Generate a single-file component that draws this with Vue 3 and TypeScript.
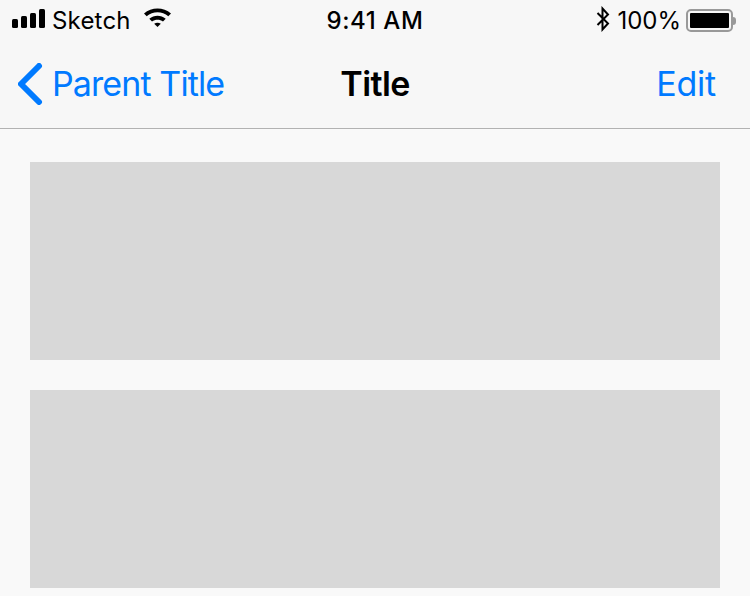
<template>
  <div class="screen">
    <header class="top">
      <div class="status-bar">
        <div class="status-left">
          <div class="signal">
            <span v-for="h in signalBars" :key="h" class="signal-bar" :style="{ height: h + 'px' }"></span>
          </div>
          <span class="carrier">Sketch</span>
          <svg class="wifi" width="30" height="20" viewBox="0 0 30 20">
            <path d="M1 6.500 C8.500 -0.300 20.500 -0.300 28 6.500 L25.300 9.300 C19.200 4 9.800 4 3.700 9.300 Z" />
            <path d="M6.300 11.800 C11 7.700 18 7.700 22.700 11.800 L20 14.600 C16.800 12 12.200 12 9 14.600 Z" />
            <path d="M11.200 16.800 C13.200 15.300 15.800 15.300 17.800 16.800 L14.500 20 Z" />
          </svg>
        </div>
        <span class="time">9:41 AM</span>
        <div class="status-right">
          <svg class="bluetooth" width="14" height="26" viewBox="0 0 14 26">
            <path d="M1.500 7 L12 17.500 L6.500 23.500 L6.500 2.500 L12 8.500 L1.500 19" fill="none" stroke="#000" stroke-width="2" />
          </svg>
          <span class="battery-text">100%</span>
          <div class="battery">
            <div class="battery-body"><div class="battery-fill"></div></div>
            <div class="battery-cap"></div>
          </div>
        </div>
      </div>
      <nav class="nav-bar">
        <a class="nav-back">
          <svg width="26" height="42" viewBox="0 0 26 42">
            <path d="M21 3 L3 21 L21 39" fill="none" stroke="#007aff" stroke-width="6" stroke-linecap="round" stroke-linejoin="round" />
          </svg>
          <span class="nav-back-label">Parent Title</span>
        </a>
        <span class="nav-title">Title</span>
        <a class="nav-edit">Edit</a>
      </nav>
    </header>
    <main class="content">
      <div v-for="n in 2" :key="n" class="block"></div>
    </main>
  </div>
</template>

<script setup lang="ts">
const signalBars: number[] = [9, 12, 15, 19];
</script>

<style>
html,
body {
  margin: 0;
  background: #f9f9f9;
}
</style>

<style scoped>
.screen {
  width: 750px;
  height: 596px;
  overflow: hidden;
  background: #f9f9f9;
  font-family: Inter, "Liberation Sans", sans-serif;
  color: #000;
}

.top {
  height: 128px;
  background: #f7f7f7;
  border-bottom: 1px solid #b2b2b2;
}

.status-bar {
  height: 40px;
  padding: 1px 14px 0 12px;
  box-sizing: border-box;
  position: relative;
  display: flex;
  align-items: center;
  justify-content: space-between;
  font-size: 24px;
}

.status-left,
.status-right {
  display: flex;
  align-items: center;
}

.signal {
  display: flex;
  align-items: flex-end;
  gap: 3px;
  height: 19px;
  margin-top: -5px;
}

.signal-bar {
  width: 6px;
  border-radius: 1.5px;
  background: #000;
}

.carrier {
  margin-left: 7px;
  letter-spacing: 0.2px;
}

.wifi {
  margin-left: 12px;
  margin-top: -7px;
}

.time {
  position: absolute;
  left: 0;
  right: 0;
  text-align: center;
  font-weight: 500;
  letter-spacing: 0.6px;
}

.bluetooth {
  margin-right: 7px;
  margin-top: -3px;
}

.battery-text {
  margin-right: 5px;
}

.battery {
  display: flex;
  align-items: center;
}

.battery-body {
  width: 47px;
  height: 23px;
  box-sizing: border-box;
  padding: 2px;
  border: 2px solid #999;
  border-radius: 5px;
}

.battery-fill {
  height: 100%;
  background: #000;
  border-radius: 1px;
}

.battery-cap {
  width: 3px;
  height: 8px;
  background: #999;
  border-radius: 0 3px 3px 0;
}

.nav-bar {
  height: 88px;
  padding: 0 34px 0 18px;
  position: relative;
  display: flex;
  align-items: center;
  justify-content: space-between;
  font-size: 34px;
  color: #007aff;
}

.nav-back {
  display: flex;
  align-items: center;
  gap: 8px;
}

.nav-back-label,
.nav-title,
.nav-edit {
  margin-top: -2px;
}

.nav-back-label {
  letter-spacing: -0.9px;
}

.nav-title {
  position: absolute;
  left: 0;
  right: 0;
  text-align: center;
  font-weight: 600;
  letter-spacing: -0.6px;
  color: #000;
}

.nav-edit {
  letter-spacing: -0.2px;
}

.content {
  padding: 33px 30px 0;
  display: flex;
  flex-direction: column;
  gap: 30px;
}

.block {
  height: 198px;
  background: #d8d8d8;
}
</style>
